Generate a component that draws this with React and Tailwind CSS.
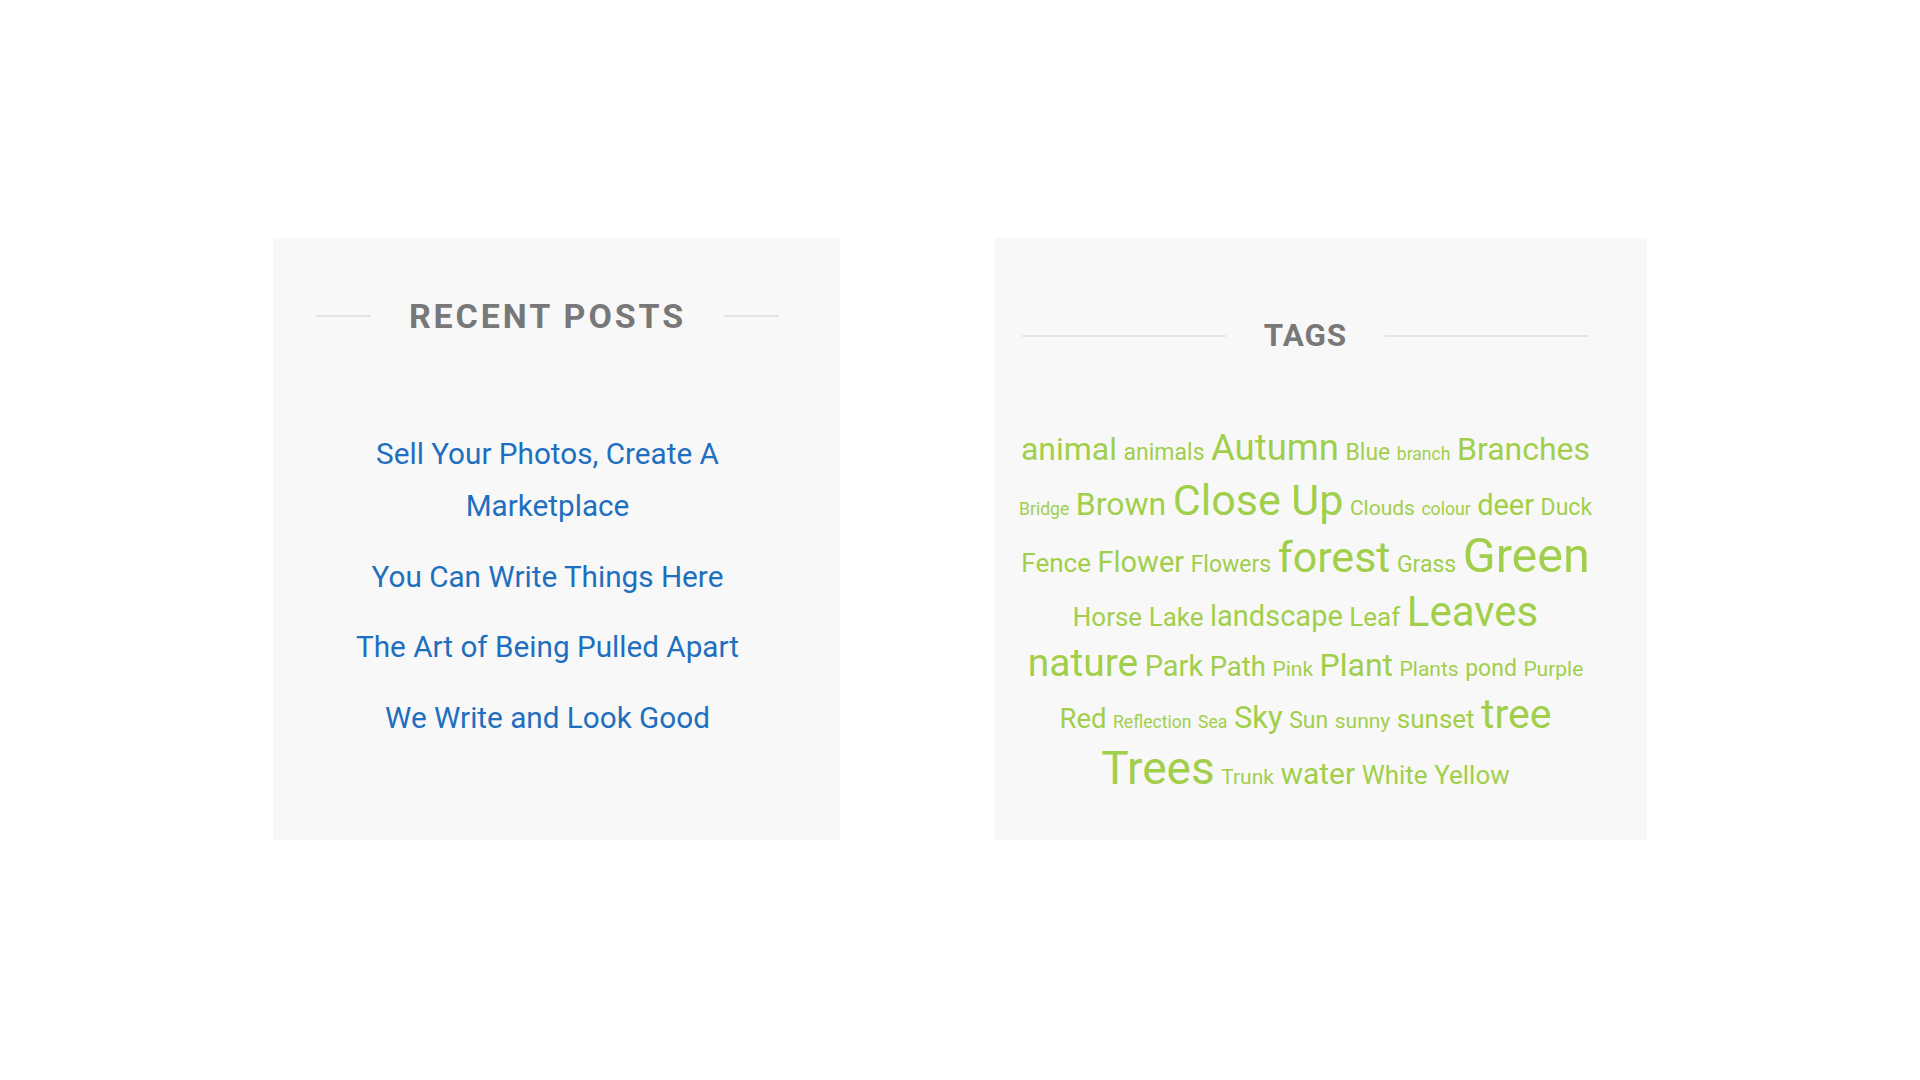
import React from "react";

const posts = [
  "Sell Your Photos, Create A Marketplace",
  "You Can Write Things Here",
  "The Art of Being Pulled Apart",
  "We Write and Look Good",
];

// tag cloud rows, sizes in px
const tagRows = [
  {
    h: "h-[49px]",
    tags: [
      ["animal", "text-[32px]"],
      ["animals", "text-[23px]"],
      ["Autumn", "text-[36.5px]"],
      ["Blue", "text-[23px]"],
      ["branch", "text-[17.6px]"],
      ["Branches", "text-[32px]"],
    ],
  },
  {
    h: "h-[53px]",
    tags: [
      ["Bridge", "text-[17.6px]"],
      ["Brown", "text-[32px]"],
      ["Close Up", "text-[43px]"],
      ["Clouds", "text-[21px]"],
      ["colour", "text-[17.6px]"],
      ["deer", "text-[29px]"],
      ["Duck", "text-[23px]"],
    ],
  },
  {
    h: "h-[59px]",
    tags: [
      ["Fence", "text-[26px]"],
      ["Flower", "text-[29px]"],
      ["Flowers", "text-[23px]"],
      ["forest", "text-[43px]"],
      ["Grass", "text-[23px]"],
      ["Green", "text-[48.4px]"],
    ],
  },
  {
    h: "h-[53px]",
    tags: [
      ["Horse", "text-[26px]"],
      ["Lake", "text-[26px]"],
      ["landscape", "text-[29px]"],
      ["Leaf", "text-[26px]"],
      ["Leaves", "text-[42px]"],
    ],
  },
  {
    h: "h-[50px]",
    tags: [
      ["nature", "text-[39px]"],
      ["Park", "text-[29px]"],
      ["Path", "text-[27.5px]"],
      ["Pink", "text-[21px]"],
      ["Plant", "text-[32px]"],
      ["Plants", "text-[21px]"],
      ["pond", "text-[23px]"],
      ["Purple", "text-[21px]"],
    ],
  },
  {
    h: "h-[51px]",
    tags: [
      ["Red", "text-[27.5px]"],
      ["Reflection", "text-[17.6px]"],
      ["Sea", "text-[17.6px]"],
      ["Sky", "text-[31px]"],
      ["Sun", "text-[23px]"],
      ["sunny", "text-[21px]"],
      ["sunset", "text-[26px]"],
      ["tree", "text-[41px]"],
    ],
  },
  {
    h: "h-[46px]",
    tags: [
      ["Trees", "text-[46px]"],
      ["Trunk", "text-[21px]"],
      ["water", "text-[30px]"],
      ["White", "text-[26px]"],
      ["Yellow", "text-[26px]"],
    ],
  },
];

function WidgetTitle({ children, size }) {
  return (
    <div className="flex items-center h-[44px]">
      <span className="flex-1 h-[2px] bg-[#e4e4e4]" />
      <h3
        className={`mx-[38px] font-bold uppercase leading-none text-[#787878] ${size}`}
      >
        {children}
      </h3>
      <span className="flex-1 h-[2px] bg-[#e4e4e4]" />
    </div>
  );
}

export default function App() {
  return (
    <div className="min-h-screen bg-white font-['Roboto',sans-serif]">
      <div className="flex justify-center items-stretch gap-[155px] pt-[238px]">
        <aside className="w-[567px] bg-[#f8f8f8] pl-[43px] pr-[61px] pt-[56px]">
          <WidgetTitle size="text-[34px] tracking-[2.9px]">Recent Posts</WidgetTitle>
          <ul className="mt-[90px] flex flex-col gap-[18.5px] text-center">
            {posts.map((p) => (
              <li key={p}>
                <a href="#" className="text-[29.7px] leading-[52px] text-[#1e6fbf]">
                  {p}
                </a>
              </li>
            ))}
          </ul>
        </aside>

        <aside className="w-[652px] bg-[#f8f8f8] pl-[27px] pr-[58px] pt-[76px] pb-[49px]">
          <WidgetTitle size="text-[31.4px] tracking-[1px]">Tags</WidgetTitle>
          <div className="mt-[72px] flex flex-col">
            {tagRows.map((row, i) => (
              <div
                key={i}
                className={`flex justify-center items-baseline gap-x-[6.5px] whitespace-nowrap ${row.h}`}
              >
                {row.tags.map(([name, size]) => (
                  <a
                    key={name}
                    href="#"
                    className={`leading-none text-[#a1cf4b] ${size}`}
                  >
                    {name}
                  </a>
                ))}
              </div>
            ))}
          </div>
        </aside>
      </div>
    </div>
  );
}
